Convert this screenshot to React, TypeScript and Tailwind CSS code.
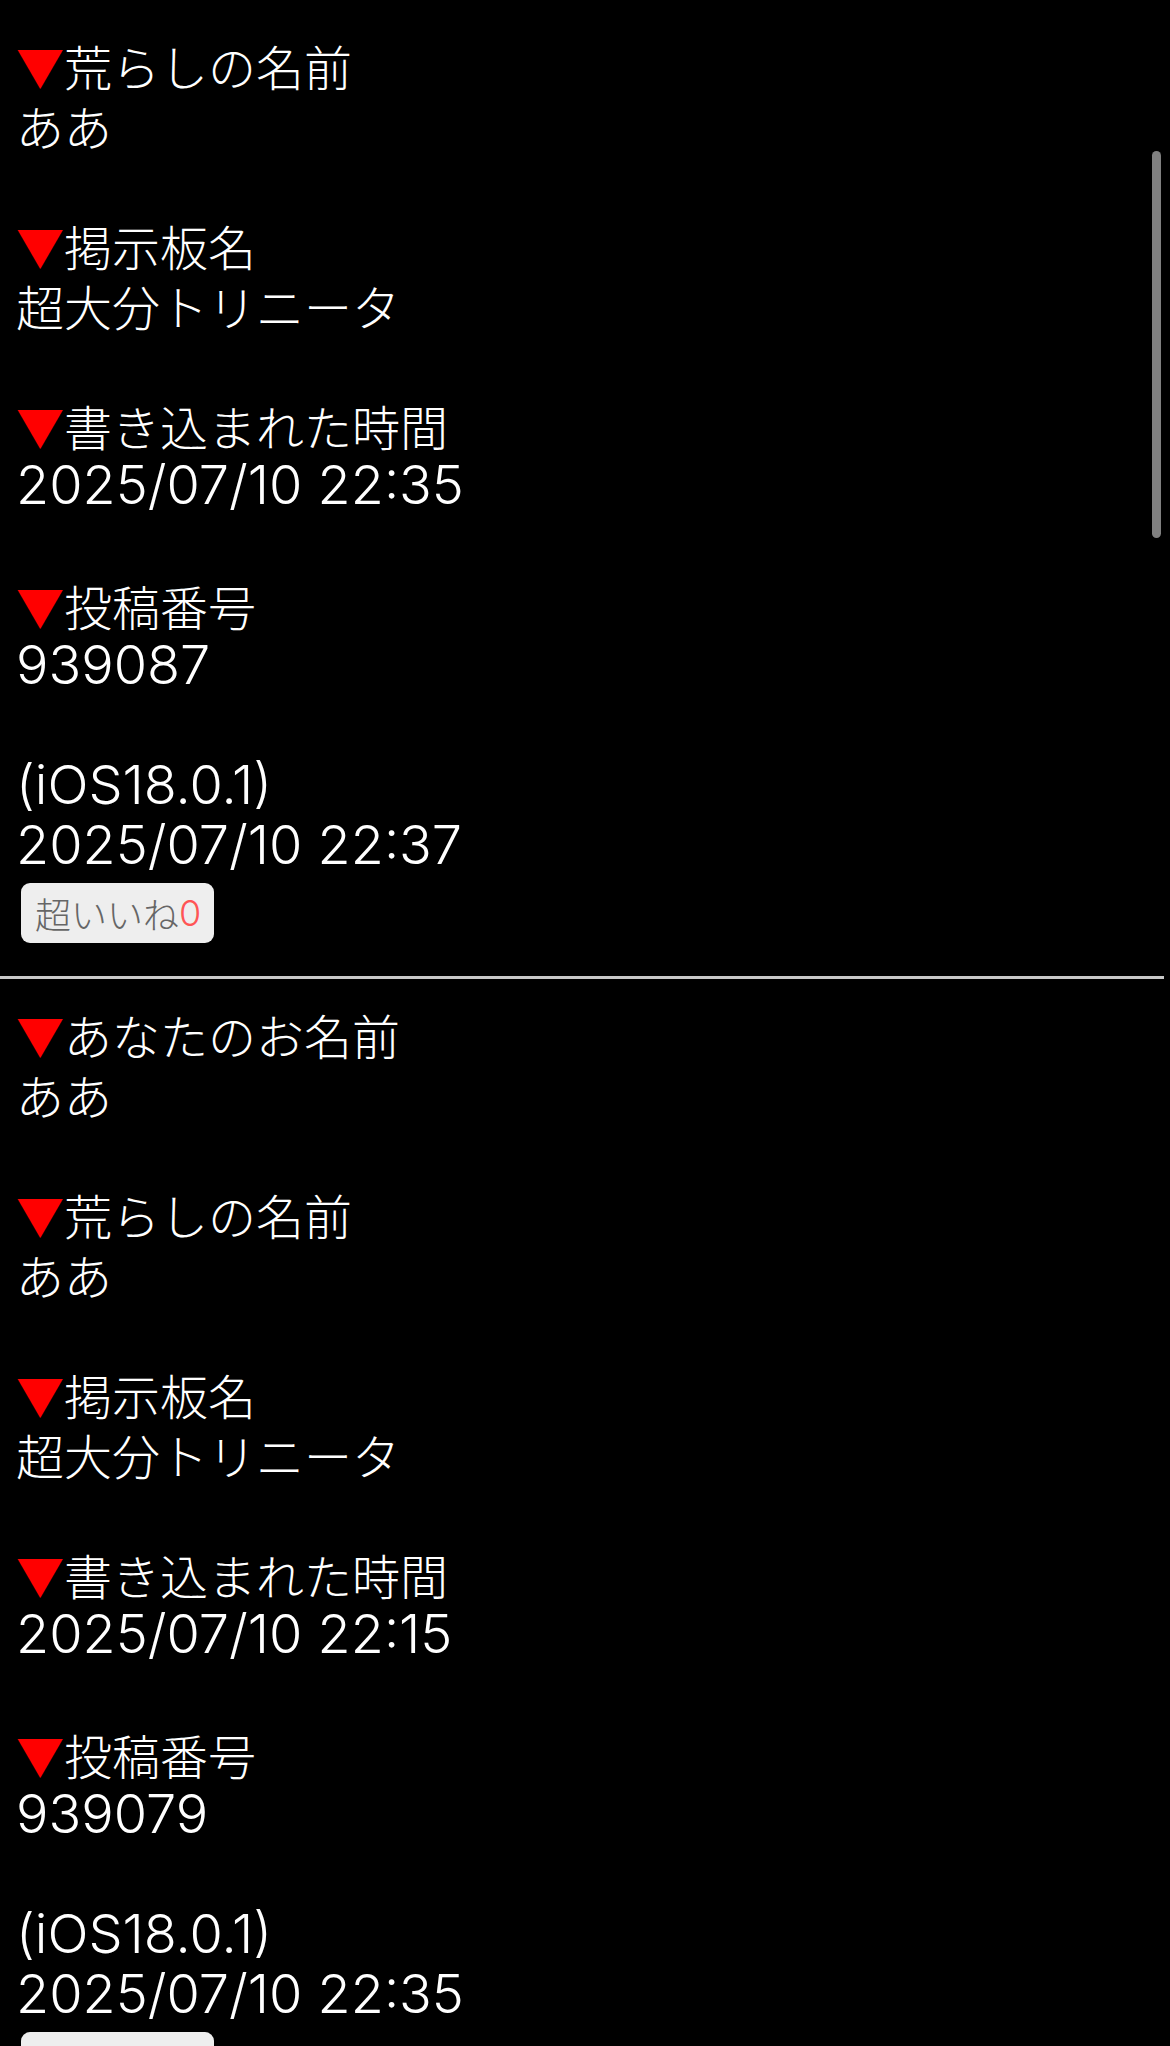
import React from 'react';

type Field = { label: string; value: string; latin?: boolean };

type Post = {
  fields: Field[];
  device: string;
  time: string;
  likes: number;
};

const posts: Post[] = [
  {
    fields: [
      { label: '荒らしの名前', value: 'ああ' },
      { label: '掲示板名', value: '超大分トリニータ' },
      { label: '書き込まれた時間', value: '2025/07/10 22:35', latin: true },
      { label: '投稿番号', value: '939087', latin: true },
    ],
    device: '(iOS18.0.1)',
    time: '2025/07/10 22:37',
    likes: 0,
  },
  {
    fields: [
      { label: 'あなたのお名前', value: 'ああ' },
      { label: '荒らしの名前', value: 'ああ' },
      { label: '掲示板名', value: '超大分トリニータ' },
      { label: '書き込まれた時間', value: '2025/07/10 22:15', latin: true },
      { label: '投稿番号', value: '939079', latin: true },
    ],
    device: '(iOS18.0.1)',
    time: '2025/07/10 22:35',
    likes: 0,
  },
];

const latinCls = "h-[60px] font-[Inter,'Noto_Sans_CJK_JP',sans-serif] text-[54px] font-light leading-[60px]";

const PostBlock: React.FC<{ post: Post }> = ({ post }) => (
  <div>
    {post.fields.map((f, i) => (
      <div key={i}>
        <div className="h-[60px]">
          <span className="text-[#ff0000]">▼</span>
          {f.label}
        </div>
        {f.latin ? <div className={latinCls}>{f.value}</div> : <div className="h-[60px]">{f.value}</div>}
        <div className="h-[60px]" />
      </div>
    ))}
    <div className={latinCls}>{post.device}</div>
    <div className={latinCls}>{post.time}</div>
    <button className="mt-[8px] ml-[5px] flex h-[60px] w-[193px] items-center rounded-[9px] bg-[#eeeeee] pl-[14px] text-[36px] font-light leading-none text-[#666666]">
      超いいね<span className="font-[Inter,sans-serif] text-[#ff5555]">{post.likes}</span>
    </button>
  </div>
);

export default function App() {
  return (
    <div className="relative h-[2046px] w-[1170px] overflow-hidden bg-black font-['Noto_Sans_CJK_JP',sans-serif] text-[48px] font-light leading-[60px] text-white">
      <div className="pl-[16px] pt-[35px]">
        <PostBlock post={posts[0]} />
      </div>
      <div className="mt-[33px] h-[3px] w-[1164px] bg-[#c8c8c8]" />
      <div className="pl-[16px] pt-[25px]">
        <PostBlock post={posts[1]} />
      </div>
      {/* overlay scrollbar */}
      <div className="absolute left-[1152px] top-[151px] h-[387px] w-[9px] rounded-full bg-[#808080]" />
    </div>
  );
}
